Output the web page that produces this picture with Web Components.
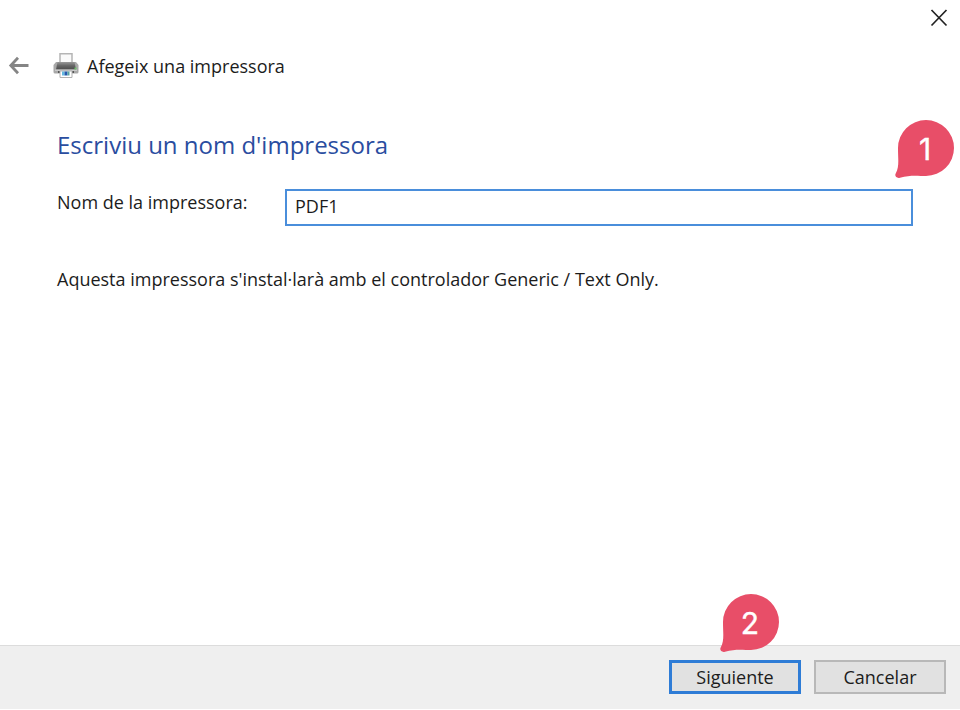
<!DOCTYPE html>
<html lang="ca">
<head>
<meta charset="utf-8">
<title>Afegeix una impressora</title>
<style>
  html, body { height: 100%; margin: 0; }
  body { background: #fff; color: #1c1c1c; font: 18px/24px "Open Sans", "Noto Sans", sans-serif;
    font-variant-ligatures: none; font-feature-settings: "locl" 0; }
  printer-wizard { min-height: 100vh; }
</style>
</head>
<body>
<printer-wizard></printer-wizard>
<script>
const define = (name, html, setup) => {
  const template = document.createElement('template');
  template.innerHTML = html;
  customElements.define(name, class extends HTMLElement {
    constructor() {
      super();
      this.attachShadow({ mode: 'open' }).append(template.content.cloneNode(true));
    }
    connectedCallback() { if (setup) setup(this, this.shadowRoot); }
  });
};

define('step-marker', `
  <style>
    :host { position: absolute; display: grid; place-items: center; width: 60px; height: 60px;
      color: #fff; font: 400 30px/36px Inter, sans-serif; pointer-events: none; }
    svg { grid-area: 1 / 1; width: 60px; height: 60px; }
    span { grid-area: 1 / 1; z-index: 1; -webkit-text-stroke: 0.4px #fff; }
  </style>
  <svg viewBox="0 0 60 60" aria-hidden="true">
    <path fill="#e84e68" d="M31 1A28 28 0 0 1 31 57C24 57 16 55.500 5 58.700C1.500 59.600 -.8 57 .8 54.300C4.500 48 3 40 3 29A28 28 0 0 1 31 1Z"/>
  </svg>
  <span><slot></slot></span>`);

define('wizard-button', `
  <style>
    :host { display: block; position: relative; }
    button { box-sizing: border-box; width: 132px; height: 34px; padding: 0; border: 2px solid #b8b8b8;
      background: #e1e1e1; color: inherit; font: inherit; }
    :host([primary]) button { border: 3px solid #2e7cd6; }
  </style>
  <button type="button"><slot></slot></button>
  <slot name="marker"></slot>`);

define('title-bar', `
  <style>
    :host { display: block; }
    .close-row { display: flex; justify-content: flex-end; padding: 8px 11px 0; }
    button { display: flex; padding: 0; border: 0; background: none; color: #222; }
    header { display: flex; align-items: center; padding: 25px 8px 0; }
    h1 { margin: 0 0 0 8px; font: inherit; }
    .back { margin-right: 24px; color: #858585; }
    svg { display: block; }
  </style>
  <div class="close-row">
    <button type="button" aria-label="Tanca">
      <svg width="20" height="20" viewBox="0 0 20 20" fill="none" stroke="currentColor" stroke-width="1.700"><path d="M2.500 2 17.500 17.500M17.500 2 2.500 17.500"/></svg>
    </button>
  </div>
  <header>
    <button type="button" class="back" aria-label="Enrere">
      <svg width="21" height="20" viewBox="0 0 21 20" fill="none" stroke="currentColor" stroke-width="2.800"><path d="M20.500 9.500H3M10 1.800 2.800 9.500 10 17.200"/></svg>
    </button>
    <svg width="26" height="26" viewBox="0 0 26 26" aria-hidden="true">
      <defs><linearGradient id="body" x2="0" y2="1"><stop stop-color="#999"/><stop offset=".5" stop-color="#666"/><stop offset="1" stop-color="#4d4d4d"/></linearGradient></defs>
      <path fill="#fafafa" stroke="#b5b5b5" stroke-width="1.500" d="M7 11V.8H19V11"/>
      <path fill="#a8a8a8" d="M3 9H23L25.500 12V19Q25.500 20.500 24 20.500H2Q.5 20.500 .5 19V12Z"/>
      <path fill="url(#body)" d="M4.500 9H21.500L23 16.500H3Z"/>
      <path fill="#c9c9c9" d="M2 16.500H24V18H2Z"/>
      <path fill="#555" d="M5 18H21V20H5Z"/>
      <path fill="#6fc56c" d="M21.500 14.500H23.500V16.500H21.500Z"/>
      <path fill="#fff" stroke="#b2b2b2" d="M7 18H19V24.500H7Z"/>
      <path fill="#62b9e0" d="M9 18.500H11.500V22.500H9Z"/><path fill="#2458ad" d="M11.500 18.500H14.500V22.500H11.500Z"/><path fill="#55a3a0" d="M14.500 18.500H16.500V22.500H14.500Z"/>
    </svg>
    <h1><slot></slot></h1>
  </header>`);

define('text-field', `
  <style>
    :host { display: grid; grid-template-columns: 228px 1fr; align-items: start; position: relative; }
    label { padding-top: 1px; }
    input { box-sizing: border-box; width: 100%; min-width: 0; height: 37px; padding: 0 8px 3px; border: 2px solid #4a8edb;
      border-radius: 0; outline: 0; background: #fff; color: inherit; font: inherit; }
  </style>
  <label for="field"></label>
  <input id="field" type="text">
  <slot name="marker"></slot>`, (host, root) => {
    root.querySelector('label').textContent = host.getAttribute('label');
    root.querySelector('input').value = host.getAttribute('value');
  });

define('printer-wizard', `
  <style>
    :host { display: flex; flex-direction: column; box-sizing: border-box; padding-bottom: 1px; }
    main { flex: 1; padding: 50px 47px 24px 57px; }
    h2 { margin: 0 0 28px; color: #2a4da0; font: 24px/32px "Open Sans", "Noto Sans", sans-serif; }
    p { margin: 41px 0 0; }
    footer { display: flex; justify-content: flex-end; gap: 13px; padding: 14px 14px 15px; border-top: 1px solid #dcdcdc; background: #efefef; }
    .name-marker { top: -70px; right: -42px; }
    .next-marker { top: -67px; left: 51px; }
  </style>
  <title-bar>Afegeix una impressora</title-bar>
  <main>
    <h2>Escriviu un nom d'impressora</h2>
    <text-field label="Nom de la impressora:" value="PDF1"><step-marker slot="marker" class="name-marker">1</step-marker></text-field>
    <p>Aquesta impressora s'instal·larà amb el controlador Generic / Text Only.</p>
  </main>
  <footer>
    <wizard-button primary>Siguiente<step-marker slot="marker" class="next-marker">2</step-marker></wizard-button>
    <wizard-button>Cancelar</wizard-button>
  </footer>`);
</script>
</body>
</html>
